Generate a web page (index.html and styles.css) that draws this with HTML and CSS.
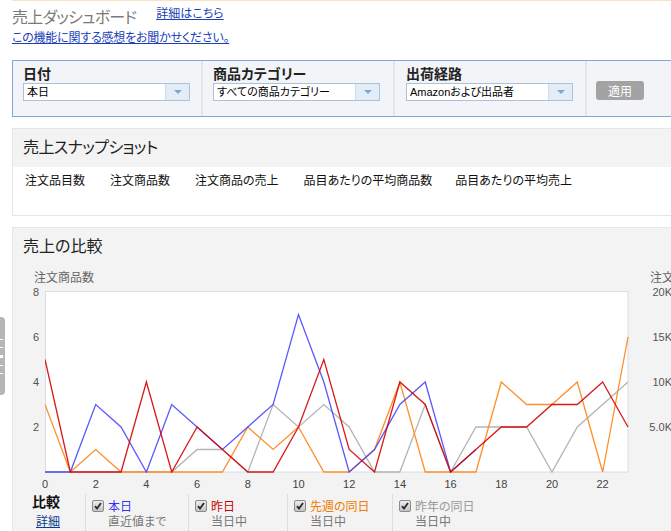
FILE: index.html
```html
<!DOCTYPE html>
<html lang="ja">
<head>
<meta charset="utf-8">
<title>売上ダッシュボード</title>
<link rel="stylesheet" href="styles.css">
</head>
<body>
<div class="feedback-tab"><i></i><i></i><i class="long"></i><i></i><i></i></div>
<div class="page">
  <div class="top">
    <div class="top-row">
      <h1 class="title">売上ダッシュボード</h1>
      <a class="link link-detail" href="#">詳細はこちら</a>
    </div>
    <a class="link link-feedback" href="#">この機能に関する感想をお聞かせください。</a>
  </div>

  <div class="filters">
    <div class="filter">
      <div class="filter-label">日付</div>
      <div class="select"><span class="select-text">本日</span><span class="select-btn"><i class="arrow"></i></span></div>
    </div>
    <div class="filter wide">
      <div class="filter-label">商品カテゴリー</div>
      <div class="select"><span class="select-text">すべての商品カテゴリー</span><span class="select-btn"><i class="arrow"></i></span></div>
    </div>
    <div class="filter wide third">
      <div class="filter-label">出荷経路</div>
      <div class="select"><span class="select-text">Amazonおよび出品者</span><span class="select-btn"><i class="arrow"></i></span></div>
    </div>
    <div class="filter-apply">
      <button class="apply">適用</button>
    </div>
  </div>

  <div class="box snapshot">
    <div class="box-head"><h2 class="box-title">売上スナップショット</h2></div>
    <div class="snap-body">
      <span>注文品目数</span>
      <span>注文商品数</span>
      <span>注文商品の売上</span>
      <span>品目あたりの平均商品数</span>
      <span class="last">品目あたりの平均売上</span>
    </div>
  </div>

  <div class="box compare">
    <div class="compare-head"><h2 class="box-title">売上の比較</h2></div>
    <svg class="chart" width="658" height="224" viewBox="13 266 658 224">
      <defs>
        <clipPath id="plotclip"><rect x="45" y="290" width="584" height="182"/></clipPath>
      </defs>
      <text class="axis-title" x="34" y="281">注文商品数</text>
      <text class="axis-title" x="650" y="281">注文</text>
      <rect class="plot" x="45.5" y="290.5" width="582.5" height="180.5"/>
      <g class="ylab">
        <text x="39" y="295">8</text>
        <text x="39" y="340">6</text>
        <text x="39" y="385">4</text>
        <text x="39" y="430">2</text>
      </g>
      <g class="ylab">
        <text x="672" y="295">20K</text>
        <text x="672" y="340">15K</text>
        <text x="672" y="385">10K</text>
        <text x="672" y="430">5.0K</text>
      </g>
      <g class="xlab">
        <text x="45" y="487">0</text>
        <text x="95.7" y="487">2</text>
        <text x="146.4" y="487">4</text>
        <text x="197.1" y="487">6</text>
        <text x="247.8" y="487">8</text>
        <text x="298.5" y="487">10</text>
        <text x="349.2" y="487">12</text>
        <text x="399.9" y="487">14</text>
        <text x="450.6" y="487">16</text>
        <text x="501.3" y="487">18</text>
        <text x="552" y="487">20</text>
        <text x="602.6" y="487">22</text>
      </g>
      <g clip-path="url(#plotclip)">
        <g transform="translate(45 471) scale(25.348 -22.5)">
          <polyline class="s-grey" vector-effect="non-scaling-stroke" points="0,0 1,0 2,0 3,0 4,0 5,0 6,1 7,1 8,0 9,3 10,2 11,3 12,2 13,0 14,0 15,3 16,0 17,2 18,2 19,2 20,0 21,2 22,3 23,4"/>
          <polyline class="s-orange" vector-effect="non-scaling-stroke" points="0,3 1,0 2,1 3,0 4,0 5,0 6,0 7,0 8,2 9,1 10,2 11,0 12,0 13,1 14,4 15,0 16,0 17,0 18,4 19,3 20,3 21,4 22,0 23,6"/>
          <polyline class="s-blue" vector-effect="non-scaling-stroke" points="0,0 1,0 2,3 3,2 4,0 5,3 6,2 7,1 8,2 9,3 10,7 11,4 12,0 13,1 14,3 15,4 16,0 17,1"/>
          <polyline class="s-red" vector-effect="non-scaling-stroke" points="0,5 1,0 2,0 3,0 4,4 5,0 6,2 7,1 8,0 9,0 10,2 11,5 12,1 13,0 14,4 15,3 16,0 17,1 18,2 19,2 20,3 21,3 22,4 23,2"/>
        </g>
      </g>
    </svg>
    <div class="legend">
      <div class="legend-head">
        <div class="legend-title">比較</div>
        <a class="legend-link" href="#">詳細</a>
      </div>
      <div class="legend-item w1">
        <span class="check"><svg width="8" height="8" viewBox="0 0 8 8"><path d="M1 4.2 L3 6.5 L7 1" /></svg></span>
        <div class="legend-text"><div class="c-blue">本日</div><div class="sub">直近値まで</div></div>
      </div>
      <div class="legend-item w2">
        <span class="check"><svg width="8" height="8" viewBox="0 0 8 8"><path d="M1 4.2 L3 6.5 L7 1" /></svg></span>
        <div class="legend-text"><div class="c-red">昨日</div><div class="sub">当日中</div></div>
      </div>
      <div class="legend-item w3">
        <span class="check"><svg width="8" height="8" viewBox="0 0 8 8"><path d="M1 4.2 L3 6.5 L7 1" /></svg></span>
        <div class="legend-text"><div class="c-orange">先週の同日</div><div class="sub">当日中</div></div>
      </div>
      <div class="legend-item w4">
        <span class="check"><svg width="8" height="8" viewBox="0 0 8 8"><path d="M1 4.2 L3 6.5 L7 1" /></svg></span>
        <div class="legend-text"><div class="c-grey">昨年の同日</div><div class="sub">当日中</div></div>
      </div>
    </div>
  </div>
</div>
</body>
</html>
```
FILE: styles.css
```css
html, body {
  margin: 0;
  padding: 0;
  overflow: hidden;
  background: #ffffff;
}
body {
  font-family: "Liberation Sans", "Noto Sans CJK JP", sans-serif;
  font-size: 12px;
  color: #111;
  font-feature-settings: "palt";
  width: 671px;
  height: 531px;
}
.page {
  margin-left: 12px;
  width: 720px;
  border-top: 1px solid #f8e4c2;
}
.top {
  padding-top: 7px;
  height: 59px;
  box-sizing: border-box;
}
.top-row {
  display: flex;
  align-items: flex-start;
}
.title {
  margin: 0;
  font-size: 16px;
  font-weight: normal;
  line-height: 20px;
  color: #7a7a7a;
  letter-spacing: -0.8px;
}
.link {
  color: #1a3fb8;
  text-decoration: underline;
  font-size: 12px;
  line-height: 14px;
}
.link-detail {
  margin-left: 20px;
  margin-top: -1px;
}
.link-feedback {
  display: block;
  margin-top: 3px;
  letter-spacing: -0.2px;
}

/* filters */
.filters {
  display: flex;
  height: 57px;
  box-sizing: border-box;
  border: 1px solid #7ea9d6;
  background: #f3f4f8;
}
.filter {
  flex: none;
  box-sizing: border-box;
  width: 190px;
  padding-left: 10px;
  border-right: 2px solid #e4e5e9;
}
.filter.wide { width: 192px; }
.filter.third { padding-left: 11px; }
.filter-label {
  font-size: 14px;
  font-weight: bold;
  line-height: 16px;
  margin-top: 5px;
  color: #222;
}
.select {
  display: flex;
  margin-top: 1px;
  width: 167px;
  height: 18px;
  box-sizing: border-box;
  border: 1px solid #a9c3dd;
  background: #fff;
}
.select-text {
  flex: 1;
  font-size: 11px;
  line-height: 16px;
  padding-left: 3px;
  color: #000;
  white-space: nowrap;
  overflow: hidden;
}
.select-btn {
  width: 23px;
  background: #e2edf8;
  border-left: 1px solid #cddcec;
  display: flex;
  align-items: center;
  justify-content: center;
}
.arrow {
  width: 0;
  height: 0;
  border-left: 4px solid transparent;
  border-right: 4px solid transparent;
  border-top: 4px solid #79a8d8;
}
.filter-apply {
  flex: 1;
  padding-left: 9px;
  display: flex;
  align-items: flex-start;
}
.apply {
  margin-top: 20px;
  width: 48px;
  height: 19px;
  padding: 0;
  border: none;
  border-radius: 3px;
  background: #a3a3a3;
  color: #fff;
  font-family: "Noto Sans CJK JP", sans-serif;
  font-size: 12px;
  line-height: 19px;
}

/* boxes */
.box {
  border: 1px solid #e6e6e6;
  margin-top: 11px;
}
.box-head {
  background: #f3f3f3;
  height: 38px;
  display: flex;
  align-items: center;
  padding-left: 10px;
}
.box-title {
  margin: 0;
  font-size: 16px;
  font-weight: normal;
  line-height: 20px;
  color: #222;
}
.snapshot .box-title {
  letter-spacing: -0.6px;
}
.snap-body {
  height: 48px;
  display: flex;
  gap: 25px;
  padding-left: 12px;
  padding-top: 7px;
  box-sizing: border-box;
  line-height: 14px;
  color: #111;
}
.snap-body .last { margin-left: -2px; }

.compare {
  background: #f3f3f3;
  height: 320px;
}
.compare-head {
  height: 39px;
  padding-left: 10px;
  padding-top: 9px;
  box-sizing: border-box;
}
.chart {
  display: block;
}
.chart text {
  font-family: "Liberation Sans", "Noto Sans CJK JP", sans-serif;
}
.axis-title {
  font-size: 12px;
  fill: #666;
}
.plot {
  fill: #fff;
  stroke: #d6dde4;
  stroke-width: 1;
}
.ylab text {
  font-size: 11px;
  fill: #555;
  text-anchor: end;
}
.xlab text {
  font-size: 11px;
  fill: #444;
  text-anchor: middle;
}
.chart polyline {
  fill: none;
  stroke-width: 1.3;
  stroke-linejoin: miter;
}
.s-grey { stroke: #b4b4b4; }
.s-orange { stroke: #ff8f2a; }
.s-blue { stroke: #4646ff; stroke-opacity: 0.9; }
.s-red { stroke: #d40000; stroke-opacity: 0.9; }

/* legend */
.legend {
  display: flex;
  margin-top: 3px;
  height: 40px;
}
.legend-head {
  width: 72px;
  padding-left: 19px;
  box-sizing: border-box;
  padding-top: 0;
}
.legend-title {
  font-size: 14px;
  font-weight: bold;
  line-height: 16px;
  color: #111;
}
.legend-link {
  display: block;
  margin-top: 5px;
  margin-left: 4px;
  font-size: 12px;
  line-height: 14px;
  color: #0b3d8f;
  text-decoration: underline;
}
.legend-item {
  display: flex;
  align-items: flex-start;
  border-left: 1px solid #dddddd;
  padding-left: 6px;
  padding-top: 6px;
  box-sizing: border-box;
}
.w1 { width: 103px; }
.w2 { width: 99px; }
.w3 { width: 105px; }
.w4 { width: 150px; }
.check {
  width: 12px;
  height: 12px;
  box-sizing: border-box;
  border: 1px solid #8a8a8a;
  border-radius: 2px;
  background: linear-gradient(#ececec, #c4c4c4);
  display: flex;
  align-items: center;
  justify-content: center;
  margin-right: 4px;
  flex: none;
}
.check path {
  fill: none;
  stroke: #2a2a2a;
  stroke-width: 1.8;
}
.legend-text {
  font-size: 12px;
  line-height: 14px;
}
.sub { color: #777; margin-top: 1px; }
.c-blue { color: #3333ee; }
.c-red { color: #cc0000; }
.c-orange { color: #f07b00; }
.c-grey { color: #999; }

/* feedback tab */
.feedback-tab {
  position: fixed;
  left: 0;
  top: 317px;
  width: 5px;
  height: 78px;
  background: #b6b6b6;
  border-radius: 0 4px 4px 0;
  display: flex;
  flex-direction: column;
  justify-content: center;
  gap: 7px;
}
.feedback-tab i {
  display: block;
  width: 3px;
  height: 1px;
  background: #fff;
}
.feedback-tab i.long { height: 3px; }
```
